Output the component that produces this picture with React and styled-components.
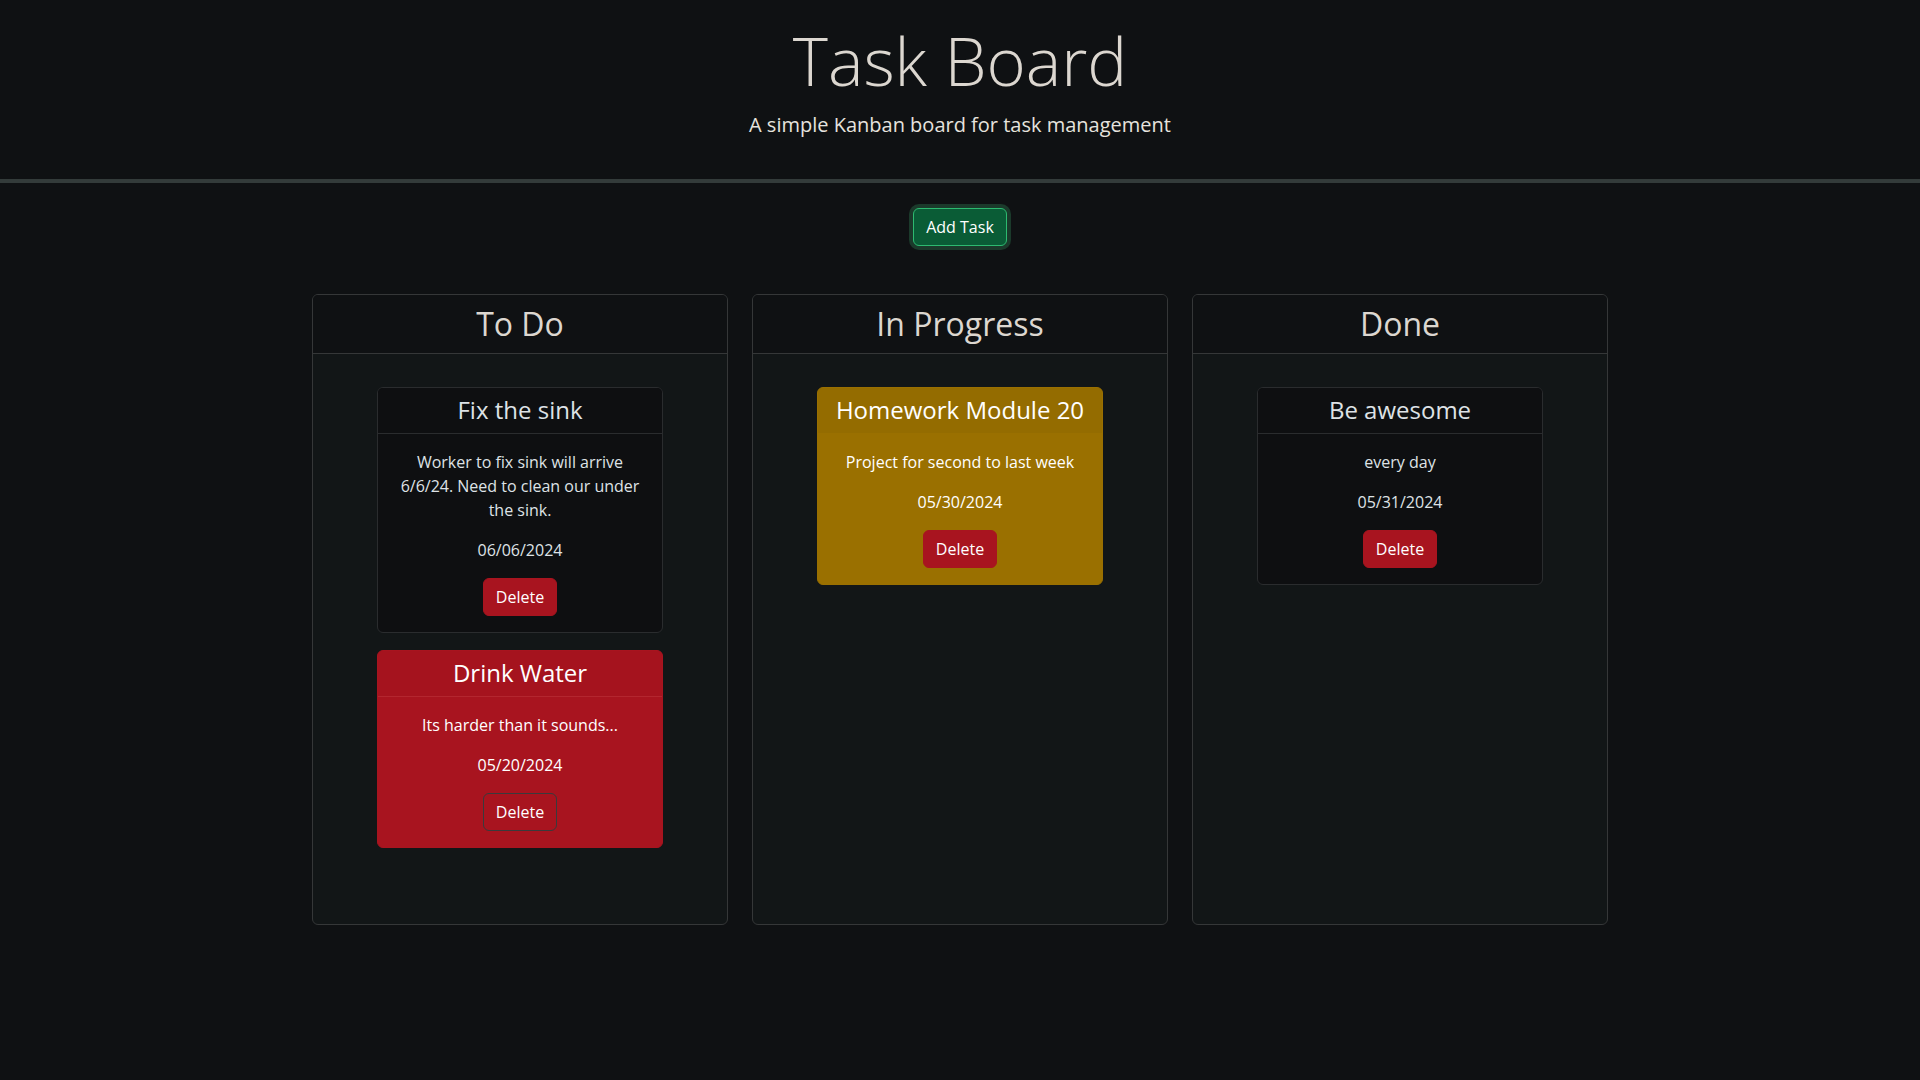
import React from "react";
import styled, { createGlobalStyle } from "styled-components";

const GlobalStyle = createGlobalStyle`
  html, body {
    margin: 0;
    padding: 0;
    background: #0f1113;
    color: #dee2e6;
    font-family: "Open Sans", "Noto Sans", sans-serif;
    font-size: 16px;
    line-height: 1.5;
  }
  * { box-sizing: border-box; }
`;

const Header = styled.header`
  text-align: center;
  padding: 20px 0 39px;
  border-bottom: 4px solid #333b3a;
`;

const Title = styled.h1`
  margin: 0;
  font-size: 67px;
  font-weight: 300;
  line-height: 1.2;
  color: #dcd7d0;
`;

const Lead = styled.p`
  margin: 10px 0 0;
  font-size: 20px;
  font-weight: 400;
  line-height: 1.5;
  color: #e6e3de;
`;

const Toolbar = styled.div`
  display: flex;
  justify-content: center;
  padding: 25px 0 48px;
`;

const AddButton = styled.button`
  font-family: inherit;
  font-size: 16px;
  line-height: 24px;
  padding: 6px 12px;
  color: #fff;
  background: #0a5c36;
  border: 1px solid #2dba70;
  border-radius: 6px;
  box-shadow: 0 0 0 4px #1b3a2b;
`;

const Board = styled.main`
  width: 1296px;
  margin: 0 auto;
  display: grid;
  grid-template-columns: repeat(3, 416px);
  gap: 24px;
`;

const Column = styled.section`
  height: 631px;
  background: #121617;
  border: 1px solid #353738;
  border-radius: 6px;
  overflow: hidden;
  display: flex;
  flex-direction: column;
`;

const ColumnHeader = styled.div`
  background: #0f1113;
  border-bottom: 1px solid #353738;
  padding: 8px 16px;
  height: 59px;
  display: flex;
  align-items: center;
  justify-content: center;
`;

const ColumnTitle = styled.h2`
  margin: 0;
  font-size: 32px;
  font-weight: 400;
  line-height: 1.2;
  color: #dcd7d0;
`;

const ColumnBody = styled.div`
  padding: 33px 0 16px;
  display: flex;
  flex-direction: column;
  align-items: center;
  gap: 17px;
`;

const tones = {
  default: { bg: "#0e0f11", head: "#0e0f11", border: "#2a2c2e", line: "#2a2c2e" },
  danger: { bg: "#a8141f", head: "#a5131e", border: "#a8141f", line: "#b3262f" },
  warning: { bg: "#9a7000", head: "#946c00", border: "#9a7000", line: "#9a7000" },
};

const TaskCard = styled.article`
  width: 286px;
  background: ${(p) => tones[p.$tone].bg};
  border: 1px solid ${(p) => tones[p.$tone].border};
  border-radius: 6px;
  overflow: hidden;
  text-align: center;
  color: ${(p) => (p.$tone === "default" ? "#dee2e6" : "#fff")};
`;

const TaskHeader = styled.div`
  background: ${(p) => tones[p.$tone].head};
  border-bottom: 1px solid ${(p) => tones[p.$tone].line};
  padding: 8px 16px;
`;

const TaskTitle = styled.h4`
  margin: 0;
  font-size: 24px;
  font-weight: 400;
  line-height: 1.2;
`;

const TaskBody = styled.div`
  padding: 16px;
  display: flex;
  flex-direction: column;
  align-items: center;
  gap: 16px;
`;

const Text = styled.p`
  margin: 0;
  font-size: 16px;
  line-height: 24px;
`;

const DeleteButton = styled.button`
  font-family: inherit;
  font-size: 16px;
  line-height: 24px;
  padding: 6px 12px;
  color: #fff;
  background: #a8141f;
  border: 1px solid ${(p) => (p.$outlined ? "#3a3a3c" : "#a8141f")};
  border-radius: 6px;
`;

const columns = [
  {
    title: "To Do",
    tasks: [
      {
        title: "Fix the sink",
        text: "Worker to fix sink will arrive 6/6/24. Need to clean our under the sink.",
        date: "06/06/2024",
        tone: "default",
      },
      {
        title: "Drink Water",
        text: "Its harder than it sounds...",
        date: "05/20/2024",
        tone: "danger",
      },
    ],
  },
  {
    title: "In Progress",
    tasks: [
      {
        title: "Homework Module 20",
        text: "Project for second to last week",
        date: "05/30/2024",
        tone: "warning",
      },
    ],
  },
  {
    title: "Done",
    tasks: [
      { title: "Be awesome", text: "every day", date: "05/31/2024", tone: "default" },
    ],
  },
];

const Task = ({ task }) => (
  <TaskCard $tone={task.tone}>
    <TaskHeader $tone={task.tone}>
      <TaskTitle>{task.title}</TaskTitle>
    </TaskHeader>
    <TaskBody>
      <Text>{task.text}</Text>
      <Text>{task.date}</Text>
      <DeleteButton $outlined={task.tone === "danger"}>Delete</DeleteButton>
    </TaskBody>
  </TaskCard>
);

export default function App() {
  return (
    <>
      <GlobalStyle />
      <Header>
        <Title>Task Board</Title>
        <Lead>A simple Kanban board for task management</Lead>
      </Header>
      <Toolbar>
        <AddButton>Add Task</AddButton>
      </Toolbar>
      <Board>
        {columns.map((col) => (
          <Column key={col.title}>
            <ColumnHeader>
              <ColumnTitle>{col.title}</ColumnTitle>
            </ColumnHeader>
            <ColumnBody>
              {col.tasks.map((t) => (
                <Task key={t.title} task={t} />
              ))}
            </ColumnBody>
          </Column>
        ))}
      </Board>
    </>
  );
}
